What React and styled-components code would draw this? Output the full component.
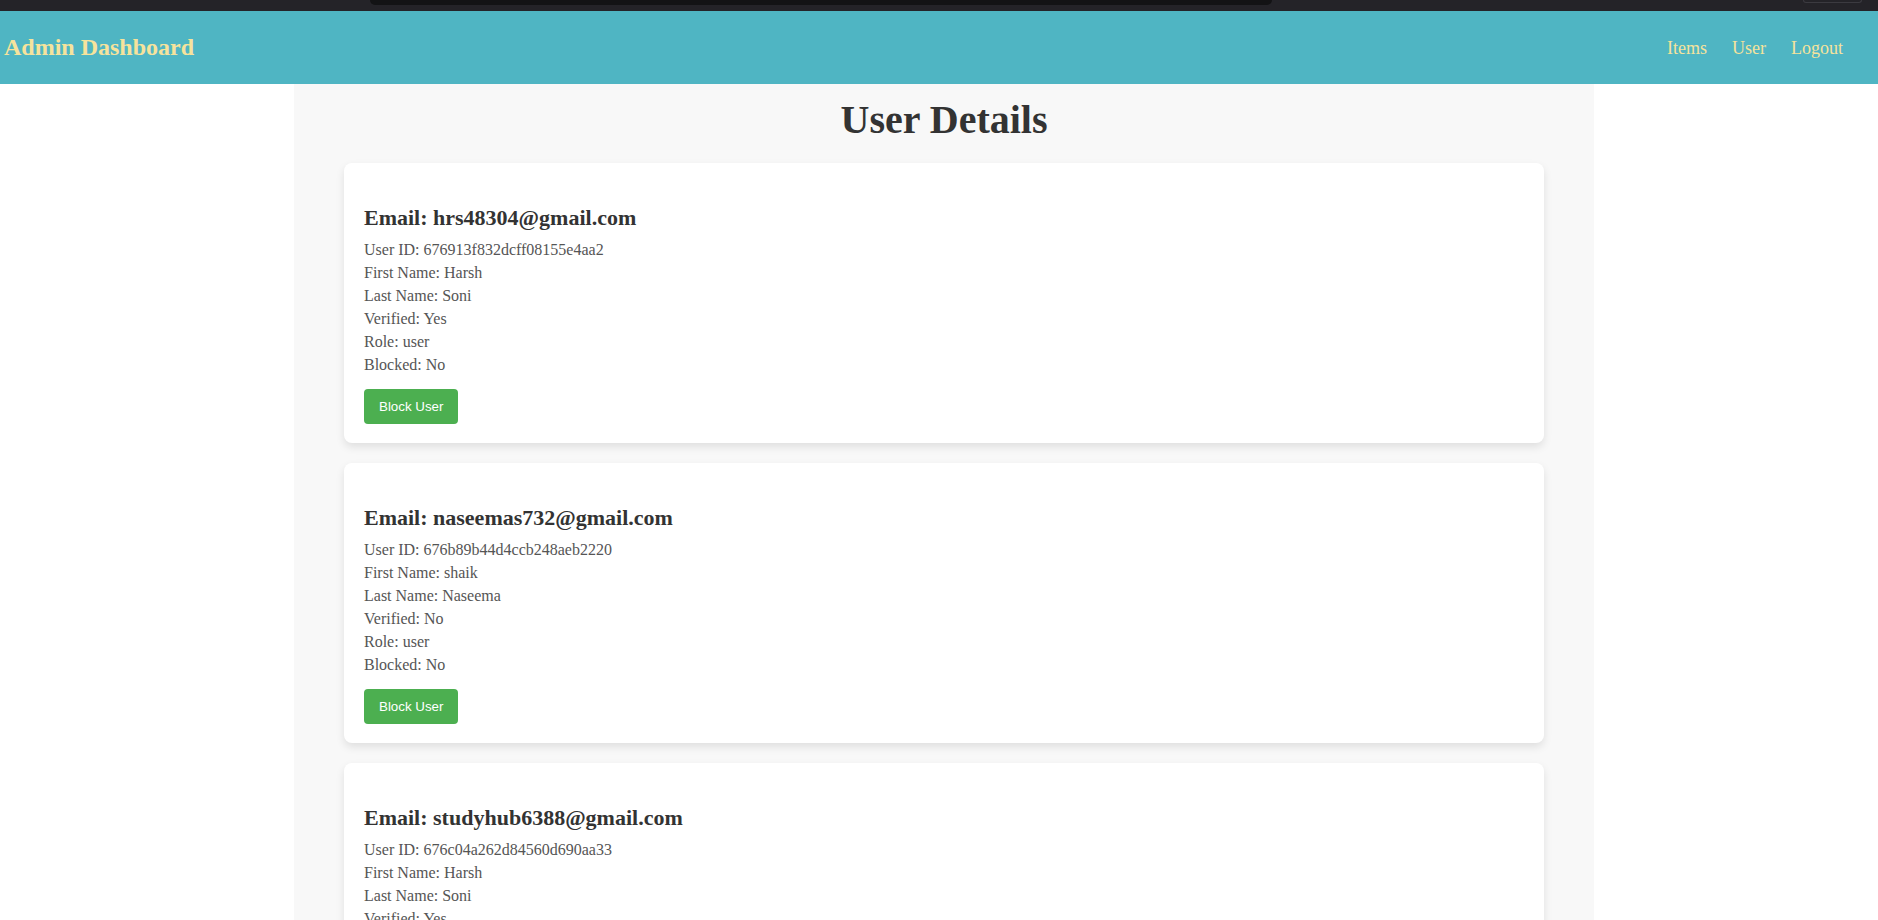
import React from "react";
import styled, { createGlobalStyle } from "styled-components";

const GlobalStyle = createGlobalStyle`
  body {
    margin: 0;
    background: #ffffff;
    font-family: "Liberation Serif", "Times New Roman", serif;
  }
`;

const users = [
  {
    id: "676913f832dcff08155e4aa2",
    email: "hrs48304@gmail.com",
    firstName: "Harsh",
    lastName: "Soni",
    verified: true,
    role: "user",
    blocked: false,
  },
  {
    id: "676b89b44d4ccb248aeb2220",
    email: "naseemas732@gmail.com",
    firstName: "shaik",
    lastName: "Naseema",
    verified: false,
    role: "user",
    blocked: false,
  },
  {
    id: "676c04a262d84560d690aa33",
    email: "studyhub6388@gmail.com",
    firstName: "Harsh",
    lastName: "Soni",
    verified: true,
    role: "user",
    blocked: false,
  },
];

function App() {
  return (
    <>
      <GlobalStyle />
      <ChromeStrip>
        <ChromeTab />
        <ChromeButton />
      </ChromeStrip>
      <Navbar>
        <Brand>Admin Dashboard</Brand>
        <NavLinks>
          <NavLink>Items</NavLink>
          <NavLink>User</NavLink>
          <NavLink>Logout</NavLink>
        </NavLinks>
      </Navbar>
      <Page>
        <Container>
          <Title>User Details</Title>
          <CardList>
            {users.map((user) => (
              <UserCard key={user.id}>
                <Email>Email: {user.email}</Email>
                <Field>User ID: {user.id}</Field>
                <Field>First Name: {user.firstName}</Field>
                <Field>Last Name: {user.lastName}</Field>
                <Field>Verified: {user.verified ? "Yes" : "No"}</Field>
                <Field>Role: {user.role}</Field>
                <Field>Blocked: {user.blocked ? "Yes" : "No"}</Field>
                <BlockButton>Block User</BlockButton>
              </UserCard>
            ))}
          </CardList>
        </Container>
      </Page>
    </>
  );
}

const ChromeStrip = styled.div`
  display: flex;
  align-items: flex-start;
  height: 11px;
  padding-left: 370px;
  background: #242328;
`;

const ChromeTab = styled.div`
  width: 902px;
  height: 5px;
  background: #131315;
  border-radius: 0 0 8px 8px;
`;

const ChromeButton = styled.div`
  width: 57px;
  height: 2px;
  margin-left: 531px;
  border: 1px solid #3b3a40;
  border-top: none;
  border-radius: 0 0 4px 4px;
`;

const Navbar = styled.nav`
  display: flex;
  align-items: center;
  justify-content: space-between;
  height: 73px;
  padding: 0 35px 0 4px;
  background: #4fb5c3;
`;

const Brand = styled.h1`
  margin: 0;
  font-size: 24px;
  font-weight: bold;
  color: #f6e39c;
`;

const NavLinks = styled.div`
  display: flex;
  gap: 25px;
  padding-top: 2px;
`;

const NavLink = styled.a`
  font-size: 18px;
  color: #f6e39c;
  text-decoration: none;
  cursor: pointer;
`;

const Page = styled.main`
  padding-left: 10px;
`;

const Container = styled.div`
  width: 1300px;
  min-height: 836px;
  margin: 0 auto;
  padding: 12px 50px 0;
  box-sizing: border-box;
  background: #f8f8f8;
`;

const Title = styled.h1`
  margin: 0 0 20px;
  text-align: center;
  font-size: 40px;
  font-weight: bold;
  color: #333333;
`;

const CardList = styled.div`
  display: flex;
  flex-direction: column;
  gap: 20px;
`;

const UserCard = styled.div`
  height: 280px;
  padding: 20px;
  box-sizing: border-box;
  background: #ffffff;
  border-radius: 8px;
  box-shadow: 0 4px 8px rgba(0, 0, 0, 0.1);
`;

const Email = styled.h3`
  margin: 22px 0 7px;
  font-size: 22px;
  font-weight: bold;
  color: #333333;
`;

const Field = styled.p`
  margin: 0;
  font-size: 16px;
  line-height: 23px;
  color: #555555;
`;

const BlockButton = styled.button`
  margin-top: 13px;
  height: 35px;
  padding: 0 15px;
  font-family: "Liberation Sans", Arial, sans-serif;
  font-size: 13.333px;
  color: #ffffff;
  background: #4caf50;
  border: none;
  border-radius: 4px;
  cursor: pointer;
`;

export default App;
